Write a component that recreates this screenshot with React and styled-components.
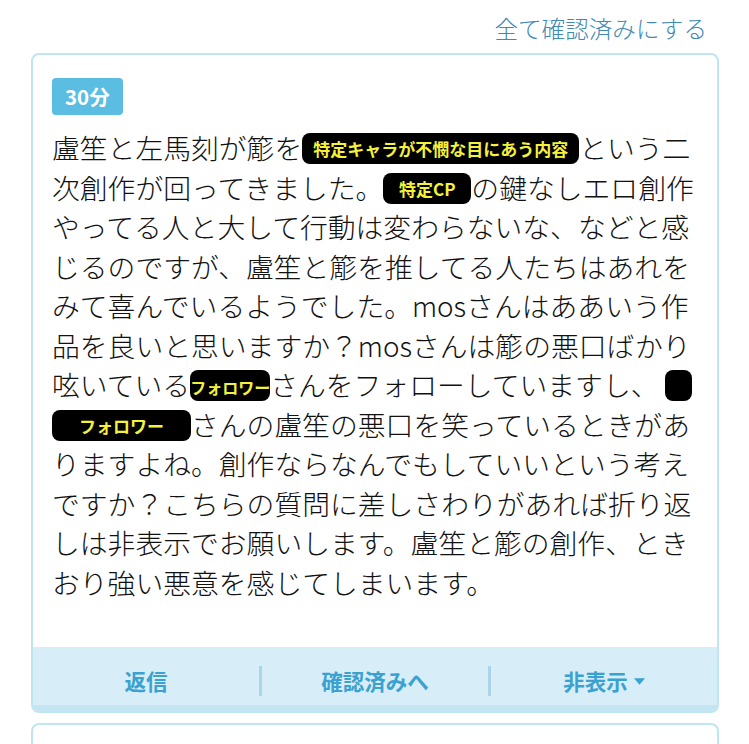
import styled, { createGlobalStyle } from "styled-components";

const GlobalStyle = createGlobalStyle`
  body {
    margin: 0;
    background: #ffffff;
    font-family: "Noto Sans CJK JP", "Noto Sans", sans-serif;
  }
`;

export default function App() {
  return (
    <>
      <GlobalStyle />
      <Page>
        <TopBar>
          <MarkAll>全て確認済みにする</MarkAll>
        </TopBar>
        <Card>
          <CardBody>
            <TimeBadge>30分</TimeBadge>
            <Message>
              盧笙と左馬刻が簓を<Redact $w={277}>特定キャラが不憫な目にあう内容</Redact>という二
              <br />
              次創作が回ってきました。<Redact $w={88}>特定CP</Redact>の鍵なしエロ創作
              <br />
              やってる人と大して行動は変わらないな、などと感
              <br />
              じるのですが、盧笙と簓を推してる人たちはあれを
              <br />
              みて喜んでいるようでした。mosさんはああいう作
              <br />
              品を良いと思いますか？mosさんは簓の悪口ばかり
              <br />
              呟いている<Redact $w={80} $tight>フォロワー</Redact>さんをフォローしていますし、
              <Redact $w={27} $gap />
              <br />
              <Redact $w={139}>フォロワー</Redact>さんの盧笙の悪口を笑っているときがあ
              <br />
              りますよね。創作ならなんでもしていいという考え
              <br />
              ですか？こちらの質問に差しさわりがあれば折り返
              <br />
              しは非表示でお願いします。盧笙と簓の創作、とき
              <br />
              おり強い悪意を感じてしまいます。
            </Message>
          </CardBody>
          <ActionBar>
            <Action>返信</Action>
            <Divider />
            <Action>確認済みへ</Action>
            <Divider />
            <Action>
              非表示
              <Caret viewBox="0 0 10 6">
                <path d="M0 0h10L5 6z" fill="currentColor" />
              </Caret>
            </Action>
          </ActionBar>
        </Card>
        <NextCard />
      </Page>
    </>
  );
}

const Page = styled.div`
  width: 749px;
  height: 744px;
  overflow: hidden;
  padding: 0 30px 0 31px;
  box-sizing: border-box;
`;

const TopBar = styled.div`
  display: flex;
  justify-content: flex-end;
  padding: 12px 12px 0 0;
  height: 53px;
  box-sizing: border-box;
`;

const MarkAll = styled.span`
  font-size: 23.6px;
  font-weight: 300;
  line-height: 32px;
  color: #3f8ab5;
`;

const Card = styled.div`
  border: 2px solid #bfe6f0;
  border-radius: 8px;
  overflow: hidden;
  background: #ffffff;
`;

const CardBody = styled.div`
  padding: 23px 10px 45px 19px;
`;

const TimeBadge = styled.span`
  display: inline-block;
  height: 37px;
  line-height: 37px;
  padding: 0 13px;
  border-radius: 4px;
  background: #5bbde1;
  color: #ffffff;
  font-weight: 700;
  font-size: 20.5px;
`;

const Message = styled.p`
  margin: 13px 0 0;
  font-size: 27.8px;
  font-weight: 300;
  line-height: 39.5px;
  color: #111111;
  white-space: nowrap;
`;

const Redact = styled.span`
  display: inline-block;
  width: ${(p) => p.$w}px;
  height: 31px;
  margin-left: ${(p) => (p.$gap ? "7px" : "0")};
  line-height: ${(p) => (p.$tight ? "34px" : "31px")};
  vertical-align: -5px;
  background: #000000;
  border-radius: 8px;
  color: #f4f23a;
  font-size: ${(p) => (p.$tight ? "16px" : "17px")};
  font-weight: 700;
  text-align: center;
  overflow: hidden;
`;

const ActionBar = styled.div`
  display: flex;
  align-items: center;
  height: 58px;
  background: #d7edf8;
  border-bottom: 6px solid #c2e5f1;
`;

const Action = styled.div`
  flex: 1;
  display: flex;
  align-items: center;
  justify-content: center;
  gap: 6px;
  color: #3aa2d0;
  font-size: 21.5px;
  font-weight: 700;
  padding-top: 9px;
`;

const Divider = styled.div`
  width: 3px;
  height: 30px;
  margin-top: 10px;
  background: #abd5e6;
`;

const Caret = styled.svg`
  width: 11px;
  height: 7px;
  margin-top: 2px;
`;

const NextCard = styled.div`
  margin-top: 10px;
  height: 60px;
  border: 2px solid #bfe6f0;
  border-radius: 8px;
`;
